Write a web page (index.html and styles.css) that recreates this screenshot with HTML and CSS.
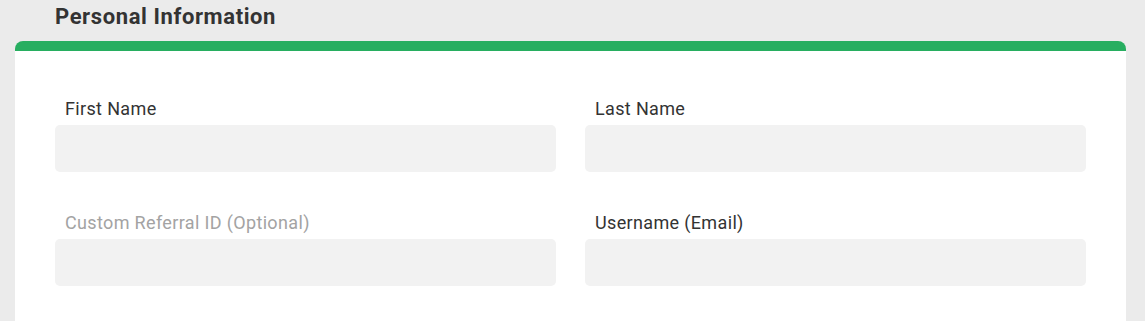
FILE: index.html
```html
<!DOCTYPE html>
<html>
<head>
    <meta charset="UTF-8">
    <title>Personal Information</title>
    <link rel="stylesheet" href="styles.css">
</head>
<body>
<div class="section">
    <h2 class="section-title">Personal Information</h2>
    <div class="card">
        <div class="form-grid">
            <div class="field">
                <label class="field-label" for="first">First Name</label>
                <input class="field-input" id="first" type="text">
            </div>
            <div class="field">
                <label class="field-label" for="last">Last Name</label>
                <input class="field-input" id="last" type="text">
            </div>
            <div class="field">
                <!-- optional field, label is greyed out -->
                <label class="field-label muted" for="ref">Custom Referral ID (Optional)</label>
                <input class="field-input" id="ref" type="text">
            </div>
            <div class="field">
                <label class="field-label" for="email">Username (Email)</label>
                <input class="field-input" id="email" type="email">
            </div>
        </div>
    </div>
</div>
</body>
</html>
```

FILE: styles.css
```css
html, body, div, h2, label, input {
    margin: 0;
    padding: 0;
}

body {
    background: #ebebeb;
    font-family: Roboto, "Liberation Sans", sans-serif;
    color: #333;
    padding: 0 19px 0 15px;
}

.section-title {
    font-size: 22px;
    font-weight: bold;
    line-height: 34px;
    letter-spacing: 0.6px;
    padding: 0 0 7px 40px;
    color: #333;
}

.card {
    background: #fff;
    border-top: 10px solid #27ae60;
    border-radius: 8px 8px 0 0;
    padding: 46px 40px 35px;
}

.form-grid {
    display: grid;
    grid-template-columns: 1fr 1fr;
    column-gap: 29px;
    row-gap: 39px;
}

.field {
    display: flex;
    flex-direction: column;
}

.field-label {
    font-size: 18px;
    line-height: 24px;
    letter-spacing: 0.35px;
    padding-left: 10px;
    margin-bottom: 4px;
    color: #333;
}

.field-label.muted {
    color: #a3a3a3;
}

.field-input {
    height: 47px;
    border: none;
    border-radius: 5px;
    background: #f2f2f2;
    outline: none;
    font-size: 16px;
    padding: 0 10px;
    box-sizing: border-box;
}
```
